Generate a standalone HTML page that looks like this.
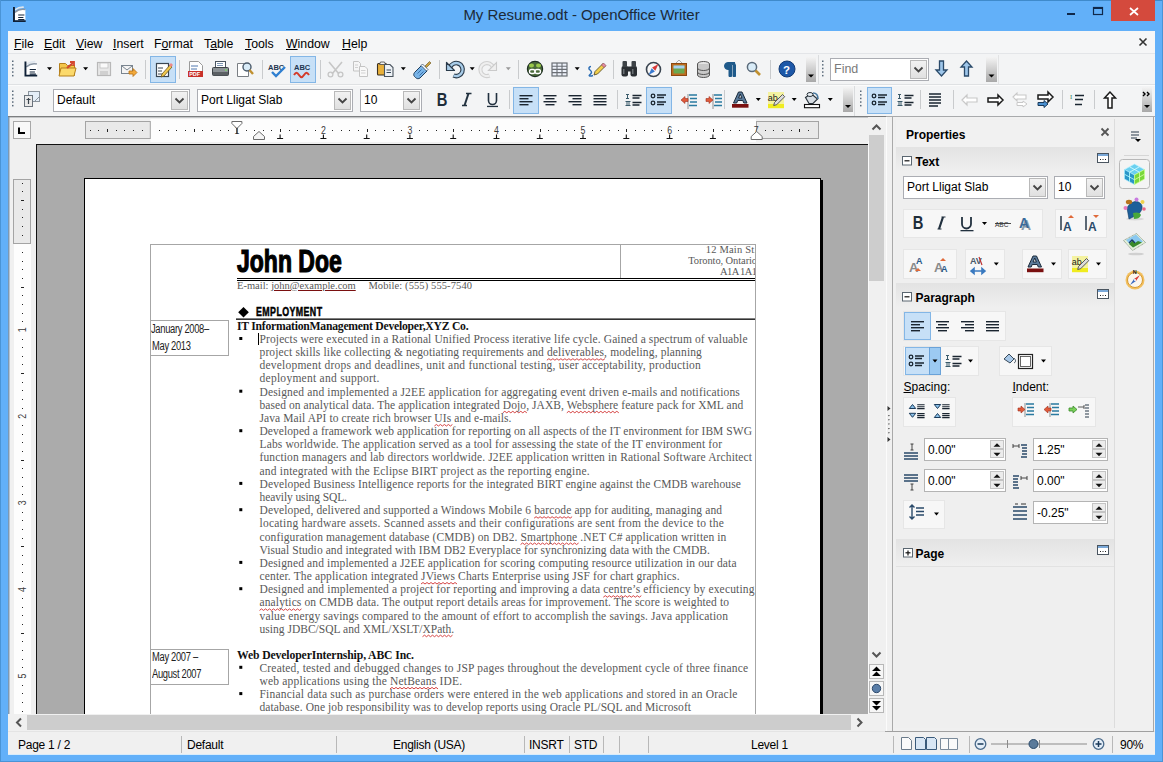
<!DOCTYPE html><html><head><meta charset="utf-8"><style>*{margin:0;padding:0;box-sizing:border-box}
html,body{width:1163px;height:762px;overflow:hidden;background:#62b0f9;font-family:"Liberation Sans",sans-serif;font-size:12px;color:#000}
.a{position:absolute}
.t{white-space:nowrap}
svg{overflow:visible}
.menu{font-size:12.3px}
u{text-decoration:underline;text-underline-offset:1px}
.sp{}
.lk{text-decoration:underline;text-decoration-color:#7a1010}
</style></head><body><div class="a" style="left:0;top:0;width:1163px;height:762px;background:#62b0f9"></div><div class="a" style="left:0;top:0;width:1163px;height:1px;background:#3f8acb"></div><div class="a" style="left:0;top:0;width:1px;height:762px;background:#4a94d6"></div><div class="a" style="left:1162px;top:0;width:1px;height:762px;background:#4a94d6"></div><div class="a" style="left:0;top:761px;width:1163px;height:1px;background:#4a94d6"></div><div class="a t" style="left:0;top:6px;width:1163px;text-align:center;font-size:15px;color:#1c2a38;letter-spacing:-0.05px">My Resume.odt - OpenOffice Writer</div><div class="a" style="left:1111px;top:0;width:44px;height:21px;background:#d44a3d"></div><svg class="a" style="left:0;top:0" width="1163" height="762"><path d="M1130 8l8 7M1138 8l-8 7" stroke="#fff" stroke-width="1.7"/><rect x="1067" y="13" width="8" height="2" fill="#10284a"/><rect x="1093.5" y="7.5" width="9" height="7" fill="none" stroke="#10284a" stroke-width="1.2"/><rect x="1093" y="7" width="10" height="2" fill="#10284a"/><g transform="translate(0,0)"><path d="M14.8 12.2c3-2.6 7-3.6 10.6-2.8v11h-10.6z" fill="#fff"/><path d="M14.8 12.3c3-2.6 7-3.6 10.6-2.8" stroke="#8a96a4" stroke-width="1.6" fill="none"/><path d="M14.8 9.8c3-2 6-2.8 9-2.6" stroke="#dfe6ee" stroke-width="1.6" fill="none"/><path d="M13 7h1.9v13.2h10.8v1.8h-12.7z" fill="#0f2036"/><path d="M18.2 15h6.2M18.2 17.5h5.2M18.2 19.6h6.2" stroke="#14263c" stroke-width="1.1"/></g></svg><div class="a" style="left:8px;top:31px;width:1147px;height:724px;background:#f0f0f0"></div><div class="a" style="left:8px;top:31px;width:1147px;height:23px;background:#f5f6f7"></div><div class="a" style="left:8px;top:53px;width:1147px;height:1px;background:#e3e5e8"></div><div class="a t menu" style="left:14px;top:36.5px"><u>F</u>ile</div><div class="a t menu" style="left:44px;top:36.5px"><u>E</u>dit</div><div class="a t menu" style="left:76px;top:36.5px"><u>V</u>iew</div><div class="a t menu" style="left:113px;top:36.5px"><u>I</u>nsert</div><div class="a t menu" style="left:154px;top:36.5px">F<u>o</u>rmat</div><div class="a t menu" style="left:204px;top:36.5px">T<u>a</u>ble</div><div class="a t menu" style="left:245px;top:36.5px"><u>T</u>ools</div><div class="a t menu" style="left:286px;top:36.5px"><u>W</u>indow</div><div class="a t menu" style="left:342px;top:36.5px"><u>H</u>elp</div><svg class="a" style="left:0;top:0" width="1163" height="762"><path d="M1139.5 38.5l7 7M1146.5 38.5l-7 7" stroke="#333" stroke-width="1.6"/></svg><div class="a" style="left:8px;top:54px;width:1147px;height:62px;background:#f3f4f5"></div><div class="a" style="left:8px;top:84px;width:1147px;height:1px;background:#dfe1e3"></div><div class="a" style="left:8px;top:85px;width:1147px;height:1px;background:#fbfbfb"></div><div class="a" style="left:8px;top:116px;width:878px;height:1px;background:#7c7e80"></div><div class="a" style="left:8px;top:117px;width:878px;height:1px;background:#c4c6c8"></div><div class="a" style="left:886px;top:116px;width:269px;height:1px;background:#a8aaac"></div><svg class="a" style="left:0;top:0" width="1163" height="762"><rect x="12" y="60.5" width="1.5" height="1.5" fill="#5a6a7a"/><rect x="12" y="64.1" width="1.5" height="1.5" fill="#5a6a7a"/><rect x="12" y="67.7" width="1.5" height="1.5" fill="#5a6a7a"/><rect x="12" y="71.3" width="1.5" height="1.5" fill="#5a6a7a"/><rect x="12" y="74.9" width="1.5" height="1.5" fill="#5a6a7a"/><g transform="translate(11.5,54.5)"><path d="M14.8 12.2c3-2.6 7-3.6 10.6-2.8v11h-10.6z" fill="#fff"/><path d="M14.8 12.3c3-2.6 7-3.6 10.6-2.8" stroke="#8a96a4" stroke-width="1.6" fill="none"/><path d="M14.8 9.8c3-2 6-2.8 9-2.6" stroke="#dfe6ee" stroke-width="1.6" fill="none"/><path d="M13 7h1.9v13.2h10.8v1.8h-12.7z" fill="#0f2036"/><path d="M18.2 15h6.2M18.2 17.5h5.2M18.2 19.6h6.2" stroke="#14263c" stroke-width="1.1"/></g><path d="M47.0 67.2h5l-2.5 3z" fill="#000"/><path d="M59.5 63.5h6l2 2h7v10h-15z" fill="#f4c64a" stroke="#b5801c"/><path d="M61 68h15l-2 8h-15z" fill="#fbd96b" stroke="#b5801c"/><path d="M67 68l6-5" stroke="#d4472f" stroke-width="2.2"/><path d="M70 62h4v4" stroke="#d4472f" stroke-width="1.8" fill="none"/><path d="M83.1 67.2h5l-2.5 3z" fill="#000"/><rect x="97.5" y="62.5" width="13" height="13" fill="#e8e8e8" stroke="#b8b8b8" stroke-width="1.2"/><rect x="100" y="63" width="8" height="5" fill="#fafafa" stroke="#c0c0c0" stroke-width=".8"/><rect x="100" y="71" width="8" height="4" fill="#d0d0d0"/><rect x="121.5" y="65.5" width="11" height="8" fill="#f4f4f4" stroke="#7a8590"/><path d="M122 66l5 4 5-4" stroke="#7a8590" fill="none"/><path d="M129 71h4v-2.5l4 4-4 4v-2.5h-4z" fill="#f2a93b" stroke="#b46d10" stroke-width=".8"/><rect x="145" y="60" width="1" height="19" fill="#c9cbcd"/><rect x="150.5" y="56.5" width="25" height="26" fill="#c7e0f7" stroke="#83b6e6"/><rect x="156.5" y="63.5" width="12" height="13" fill="#fff" stroke="#3a4652" stroke-width="1.2"/><path d="M158 68h5M158 71h4M158 74h5" stroke="#3a4652"/><path d="M162 74l8-9 2 2-8 9-3 1z" fill="#f1c84b" stroke="#6a5420" stroke-width=".8"/><path d="M169 65l2-2 2 2-2 2" fill="#e88" /><rect x="179" y="60" width="1" height="19" fill="#c9cbcd"/><path d="M189.5 61.5h9l4 4v11h-13z" fill="#fff" stroke="#9a9a9a"/><path d="M191 66h7M191 69h6" stroke="#5078b0"/><rect x="188" y="71" width="15" height="6" fill="#c8312a"/><text x="189.2" y="76.3" font-family="Liberation Sans" font-weight="bold" font-size="5.5" fill="#fff">PDF</text><rect x="215.5" y="61.5" width="10" height="6" fill="#fff" stroke="#4a5560"/><path d="M217 63.5h6M217 65.5h6" stroke="#5a7aa0" stroke-width=".8"/><rect x="212.5" y="67.5" width="16" height="8" rx="1" fill="#8c9296" stroke="#3c4246"/><rect x="213" y="72" width="15" height="3.5" fill="#5b6064"/><circle cx="226" cy="70" r=".9" fill="#7fdd6a"/><path d="M237.5 63.5h8l3 3v10h-11z" fill="#fff" stroke="#7a7f84"/><circle cx="247" cy="67" r="4" fill="#d9ecf8" stroke="#4a5a6a" stroke-width="1.4"/><path d="M249.5 70l3.5 4" stroke="#c09030" stroke-width="2.4"/><rect x="262" y="60" width="1" height="19" fill="#c9cbcd"/><text x="268" y="70" font-family="Liberation Sans" font-weight="bold" font-size="7.5" fill="#1f3550">ABC</text><path d="M272 72l4 4 9-9" stroke="#2f7fd0" stroke-width="2.4" fill="none"/><rect x="290.5" y="56.5" width="25" height="26" fill="#c7e0f7" stroke="#83b6e6"/><text x="294" y="70" font-family="Liberation Sans" font-weight="bold" font-size="7.5" fill="#1f3550">ABC</text><path d="M294 75c2-3 3-3 5 0s3 3 5 0 3-3 5 0" stroke="#d43a2a" stroke-width="2" fill="none"/><rect x="320" y="60" width="1" height="19" fill="#c9cbcd"/><path d="M329 62l10 12M342 62l-10 12" stroke="#c6c6c6" stroke-width="1.6"/><circle cx="330.5" cy="74.5" r="2.4" fill="none" stroke="#c6c6c6" stroke-width="1.3"/><circle cx="340.5" cy="74.5" r="2.4" fill="none" stroke="#c6c6c6" stroke-width="1.3"/><path d="M353.5 61.5h5l2 2v7.5h-7z" fill="#f6f6f6" stroke="#c4c4c4"/><path d="M359.5 66.5h5.5l2.5 2.5v7.5h-8z" fill="#f8f8f8" stroke="#c4c4c4"/><path d="M355 65h3M355 67.5h3M361 70.5h4.5M361 73h4.5" stroke="#c8c8c8" stroke-width=".8"/><rect x="377.5" y="63.5" width="9" height="11.5" rx="1" fill="#e8b03a" stroke="#3a3020" stroke-width="1.1"/><path d="M379.5 64.5h6l-1-2.5h-4z" fill="#f4f4f4" stroke="#444" stroke-width=".8"/><path d="M384.5 64.5h5.5l3 3v9h-8.5z" fill="#eef2f6" stroke="#4a545e" stroke-width="1.1"/><path d="M386.5 70h4.5M386.5 72.5h4.5" stroke="#3a4a5a" stroke-width="1"/><path d="M400.8 67.2h5l-2.5 3z" fill="#000"/><path d="M414.5 72.5l7-7 5.5 5.5-7 7c-1.5 1-3 1-4.5-.5l-1-1c-1-1-1-2.5 0-4z" fill="#78b4e8" stroke="#1f3d5c" stroke-width="1"/><path d="M417.5 73.5l4-4M419.5 75.5l4-4" stroke="#2d5f9c" stroke-width=".8"/><path d="M421 65.5l1.5-1.5 5.5 5.5-1.5 1.5z" fill="#fff" stroke="#1f3d5c" stroke-width=".7"/><path d="M425 66l4.5-4.5 1.5 1.5-4.5 4.5z" fill="#c8a040" stroke="#6a5018" stroke-width=".6"/><rect x="439" y="60" width="1" height="19" fill="#c9cbcd"/><path d="M450 67.5a6.5 6.5 0 1 1 3.5 8" stroke="#2a3a4a" stroke-width="4.6" fill="none"/><path d="M450 67.5a6.5 6.5 0 1 1 3.5 8" stroke="#a8cce8" stroke-width="2.4" fill="none"/><path d="M446.5 62.5v8h8z" fill="#a8cce8" stroke="#2a3a4a" stroke-width="1.2" stroke-linejoin="round"/><path d="M469.7 67.2h5l-2.5 3z" fill="#000"/><path d="M493 67.5a6.5 6.5 0 1 0 -3.5 8" stroke="#d0d0d0" stroke-width="4.2" fill="none"/><path d="M493 67.5a6.5 6.5 0 1 0 -3.5 8" stroke="#efefef" stroke-width="2" fill="none"/><path d="M496.5 62.5v8h-8z" fill="#efefef" stroke="#cacaca" stroke-width="1.1"/><path d="M505.8 67.2h5l-2.5 3z" fill="#9a9a9a"/><rect x="518" y="60" width="1" height="19" fill="#c9cbcd"/><circle cx="535" cy="69" r="7.6" fill="#4a6a3a" stroke="#1e2e22" stroke-width="1.2"/><ellipse cx="531.5" cy="65.5" rx="2.5" ry="2" fill="#9ac84a"/><ellipse cx="538.5" cy="65.5" rx="2.5" ry="2" fill="#9ac84a"/><rect x="529.5" y="69.5" width="5.5" height="4" rx="2" fill="none" stroke="#fff" stroke-width="1.3"/><rect x="535" y="69.5" width="5.5" height="4" rx="2" fill="none" stroke="#fff" stroke-width="1.3"/><rect x="552" y="63" width="15" height="13" fill="#eef2fa" stroke="#6a6e74" stroke-width="1.2"/><path d="M552 66.2h15M552 69.4h15M552 72.6h15M557 63v13M562 63v13" stroke="#6a6e74" stroke-width="1.1"/><path d="M574.7 67.2h5l-2.5 3z" fill="#000"/><path d="M591 66.5c-2 0-3 2-1 3.5s2 3 0 4.5 0 2 3 1" stroke="#2b6db5" stroke-width="1.5" fill="none"/><path d="M594 75l1-3.5 8-8 2.5 2.5-8 8z" fill="#f2d04b" stroke="#4a4020" stroke-width=".8"/><path d="M601.5 65l2-2 2.5 2.5-2 2z" fill="#e48aa0" stroke="#8a4a5a" stroke-width=".6"/><rect x="613" y="60" width="1" height="19" fill="#c9cbcd"/><rect x="621.5" y="66" width="6.5" height="10.5" rx="2" fill="#2b2f33"/><rect x="630.5" y="66" width="6.5" height="10.5" rx="2" fill="#2b2f33"/><rect x="622.5" y="61" width="4.5" height="6" rx="1" fill="#3d4246"/><rect x="631.5" y="61" width="4.5" height="6" rx="1" fill="#3d4246"/><rect x="627" y="66.5" width="4" height="5" fill="#2b2f33"/><rect x="623" y="69" width="1.5" height="5" fill="#6a7074"/><rect x="632" y="69" width="1.5" height="5" fill="#6a7074"/><circle cx="653.5" cy="69.5" r="7" fill="#f8f8f8" stroke="#3a4450" stroke-width="1.6"/><path d="M658.5 64l-3.2 6.8-3.2-3.2z" fill="#d83a3a"/><path d="M648.5 75l3.2-6.8 3.2 3.2z" fill="#3a7ad0"/><rect x="671.5" y="63.5" width="15" height="12" fill="#c06a20" stroke="#8a4a10"/><rect x="673.5" y="65.5" width="11" height="8" fill="#6aa84f"/><path d="M673.5 65.5h11v3h-11z" fill="#a8d0f0"/><path d="M676 63l3-3 3 3" stroke="#888" fill="none" stroke-width=".7"/><g transform="translate(-6,0)"><ellipse cx="709.5" cy="64" rx="6" ry="2.5" fill="#e4e4e4" stroke="#555"/><path d="M703.5 64v11a6 2.5 0 0 0 12 0v-11" fill="#c8c8c8" stroke="#555"/><path d="M703.5 68a6 2.5 0 0 0 12 0M703.5 72a6 2.5 0 0 0 12 0" fill="none" stroke="#555"/></g><path d="M735 62.5h-7a3.5 3.5 0 0 0 0 7h1v7h2.5v-12h1.5v12h2.5v-12" fill="#1f5a8a" stroke="#1f5a8a" stroke-width="1"/><circle cx="752" cy="67" r="4.6" fill="#d9ecf8" stroke="#5a6a7a" stroke-width="1.5"/><path d="M755.5 70.5l4.5 4.5" stroke="#c09030" stroke-width="2.6"/><rect x="770" y="60" width="1" height="19" fill="#c9cbcd"/><circle cx="787" cy="69" r="8" fill="#1d58a8" stroke="#123a74"/><text x="783" y="73.5" font-family="Liberation Sans" font-weight="bold" font-size="11.5" fill="#fff">?</text><defs><linearGradient id="ovg" x1="0" y1="0" x2="0" y2="1"><stop offset="0" stop-color="#f4f4f4"/><stop offset="1" stop-color="#a8a8a8"/></linearGradient></defs><rect x="806" y="57" width="10" height="25" fill="url(#ovg)"/><path d="M808.0 74.5h6l-3.0 3z" fill="#000"/><rect x="818" y="55" width="1" height="29" fill="#dadcde"/><rect x="822" y="60.5" width="1.5" height="1.5" fill="#5a6a7a"/><rect x="822" y="64.1" width="1.5" height="1.5" fill="#5a6a7a"/><rect x="822" y="67.7" width="1.5" height="1.5" fill="#5a6a7a"/><rect x="822" y="71.3" width="1.5" height="1.5" fill="#5a6a7a"/><rect x="822" y="74.9" width="1.5" height="1.5" fill="#5a6a7a"/><rect x="986" y="57" width="11" height="25" fill="url(#ovg)"/><path d="M988.5 74.5h6l-3.0 3z" fill="#000"/><rect x="998" y="55" width="1" height="29" fill="#e2e3e4"/><path d="M942 61v9h-3.5l5.5 6 5.5-6h-3.5v-9z" fill="#9ec6ea" stroke="#2a4a6a" stroke-width="1.3" transform="translate(-2.5,0)"/><path d="M967 76v-9h-3.5l5.5-6 5.5 6h-3.5v9z" fill="#9ec6ea" stroke="#2a4a6a" stroke-width="1.3" transform="translate(-2.5,0)"/></svg><div class="a" style="left:830px;top:58px;width:99px;height:23px;background:#fff;border:1px solid #abadb3"></div><div class="a t" style="left:834px;top:58px;height:23px;line-height:23px;font-size:12.5px;color:#7a7a7a">Find</div><div class="a" style="left:910px;top:60px;width:17px;height:19px;background:linear-gradient(#f2f2f2,#e0e0e0);border:1px solid #b9b9b9"></div><svg class="a" style="left:0;top:0" width="1163" height="762"><path d="M914.5 67.5l4 4l4-4" stroke="#444" stroke-width="1.8" fill="none"/></svg><svg class="a" style="left:0;top:0" width="1163" height="762"><rect x="12" y="90.5" width="1.5" height="1.5" fill="#5a6a7a"/><rect x="12" y="94.1" width="1.5" height="1.5" fill="#5a6a7a"/><rect x="12" y="97.7" width="1.5" height="1.5" fill="#5a6a7a"/><rect x="12" y="101.3" width="1.5" height="1.5" fill="#5a6a7a"/><rect x="12" y="104.9" width="1.5" height="1.5" fill="#5a6a7a"/><rect x="28.5" y="91.5" width="11" height="10" fill="#e4eef8" stroke="#8a939c"/><path d="M35 101l4-4" stroke="#8a939c"/><rect x="24.5" y="95.5" width="8" height="11" fill="#eaeaea" stroke="#6a737c"/><path d="M28.5 98v6M26.5 99.5h4" stroke="#3a434c" stroke-width="1.2"/><text x="0" y="0" transform="translate(436.8,106.2) scale(0.82,1)" font-family="Liberation Sans" font-weight="bold" font-size="18" fill="#1f2d3a">B</text><path d="M464.5 105.5l4-12" stroke="#22313f" stroke-width="2"/><path d="M462 105.5h5M466 93.5h5.5" stroke="#22313f" stroke-width="1.3"/><path d="M488.5 93v7.5a4 4 0 0 0 8 0v-7.5" stroke="#22313f" stroke-width="1.6" fill="none"/><rect x="487" y="105.8" width="11" height="1.3" fill="#22313f"/><rect x="509" y="90" width="1" height="19" fill="#c9cbcd"/><rect x="513.5" y="87.5" width="25" height="26" fill="#c7e0f7" stroke="#83b6e6"/><rect x="519.5" y="95" width="13" height="1.4" fill="#1a2530"/><rect x="519.5" y="98" width="9" height="1.4" fill="#1a2530"/><rect x="519.5" y="101" width="13" height="1.4" fill="#1a2530"/><rect x="519.5" y="104" width="9" height="1.4" fill="#1a2530"/><rect x="543.5" y="95" width="13" height="1.4" fill="#1a2530"/><rect x="545.5" y="98" width="9" height="1.4" fill="#1a2530"/><rect x="543.5" y="101" width="13" height="1.4" fill="#1a2530"/><rect x="545.5" y="104" width="9" height="1.4" fill="#1a2530"/><rect x="568.5" y="95" width="13" height="1.4" fill="#1a2530"/><rect x="572.5" y="98" width="9" height="1.4" fill="#1a2530"/><rect x="568.5" y="101" width="13" height="1.4" fill="#1a2530"/><rect x="572.5" y="104" width="9" height="1.4" fill="#1a2530"/><rect x="593.5" y="95" width="13" height="1.4" fill="#1a2530"/><rect x="593.5" y="98" width="13" height="1.4" fill="#1a2530"/><rect x="593.5" y="101" width="13" height="1.4" fill="#1a2530"/><rect x="593.5" y="104" width="13" height="1.4" fill="#1a2530"/><rect x="617" y="90" width="1" height="19" fill="#c9cbcd"/><path d="M626.0 94.5h3M627.5 94.5v4M626.0 98.5h3" stroke="#3a5a6a" stroke-width="1"/><path d="M625.5 101.5h5M627.0 101.5v4M629.0 101.5v4M625.5 105.5h5" stroke="#3a5a6a" stroke-width="1"/><path d="M632.5 95.5h9M632.5 98h7M632.5 102.5h9M632.5 105h7" stroke="#1a2530" stroke-width="1.4"/><rect x="646.5" y="87.5" width="25" height="26" fill="#c7e0f7" stroke="#83b6e6"/><circle cx="653" cy="96" r="1.8" fill="none" stroke="#1a2530" stroke-width="1.3"/><circle cx="653" cy="103" r="1.8" fill="none" stroke="#1a2530" stroke-width="1.3"/><path d="M657 95h9M657 97.5h7M657 102h9M657 104.5h7" stroke="#1a2530" stroke-width="1.4"/><path d="M688 94v15" stroke="#777" stroke-width=".8"/><path d="M689 95h8M690 98.5h7M690 102h7M689 105.5h8" stroke="#2a7aa0" stroke-width="1.5"/><path d="M681 100l4-3.5v2h3v3h-3v2z" fill="#e05a3a" stroke="#a03020" stroke-width=".6"/><path d="M713 94v15" stroke="#777" stroke-width=".8"/><path d="M714 95h8M715 98.5h7M715 102h7M714 105.5h8" stroke="#2a7aa0" stroke-width="1.5"/><path d="M713 100l-4-3.5v2h-3v3h3v2z" fill="#e05a3a" stroke="#a03020" stroke-width=".6"/><rect x="724" y="90" width="1" height="19" fill="#c9cbcd"/><path d="M733.5 103l5-11h3.5l5 11h-3.2l-1-2.5h-5.1l-1 2.5zM738.6 98h3.3l-1.65-4z" fill="#5a7a9a" stroke="#1a2a3a" stroke-width="1" fill-rule="evenodd"/><rect x="732" y="104" width="16.5" height="3.7" fill="#7a1010"/><path d="M755.8 98.0h5l-2.5 3z" fill="#000"/><rect x="768" y="92" width="16" height="12" fill="#f4f2a0"/><rect x="768" y="104" width="16" height="4.2" fill="#f0ec20"/><text x="767.8" y="101" font-family="Liberation Sans" font-size="9" fill="#222">ab</text><path d="M774.5 102.5l8-8 2.2 2.2-8 8-3 .8z" fill="#dcdcdc" stroke="#4a4a4a" stroke-width=".9"/><path d="M791.7 98.0h5l-2.5 3z" fill="#000"/><path d="M805.5 97.5l5.5-4 6.5 5.5-4.5 4.5h-4z" fill="#d8dee4" stroke="#2a343c" stroke-width="1.2"/><ellipse cx="810" cy="94.5" rx="3" ry="2" fill="#e8eef2" stroke="#2a343c" stroke-width="1"/><path d="M813 93c3 0 5 2 5 6" stroke="#4a7aa0" stroke-width="1.6" fill="none"/><rect x="804.5" y="104.5" width="15" height="3.2" fill="#fff" stroke="#111" stroke-width="1.1"/><path d="M827.8 98.0h5l-2.5 3z" fill="#000"/><rect x="843" y="87" width="10" height="25" fill="url(#ovg2)"/><path d="M845.0 105.0h6l-3.0 3z" fill="#000"/><defs><linearGradient id="ovg2" x1="0" y1="0" x2="0" y2="1"><stop offset="0" stop-color="#f4f4f4"/><stop offset="1" stop-color="#a8a8a8"/></linearGradient></defs><rect x="854" y="86" width="1" height="30" fill="#dadcde"/><rect x="860" y="90.5" width="1.5" height="1.5" fill="#5a6a7a"/><rect x="860" y="94.1" width="1.5" height="1.5" fill="#5a6a7a"/><rect x="860" y="97.7" width="1.5" height="1.5" fill="#5a6a7a"/><rect x="860" y="101.3" width="1.5" height="1.5" fill="#5a6a7a"/><rect x="860" y="104.9" width="1.5" height="1.5" fill="#5a6a7a"/><rect x="867.5" y="87.5" width="24" height="26" fill="#c7e0f7" stroke="#83b6e6"/><circle cx="874" cy="96" r="1.8" fill="none" stroke="#1a2530" stroke-width="1.3"/><circle cx="874" cy="103" r="1.8" fill="none" stroke="#1a2530" stroke-width="1.3"/><path d="M878 95h9M878 97.5h7M878 102h9M878 104.5h7" stroke="#1a2530" stroke-width="1.4"/><path d="M898.0 94.5h3M899.5 94.5v4M898.0 98.5h3" stroke="#3a5a6a" stroke-width="1"/><path d="M897.5 101.5h5M899.0 101.5v4M901.0 101.5v4M897.5 105.5h5" stroke="#3a5a6a" stroke-width="1"/><path d="M904.5 95.5h9M904.5 98h7M904.5 102.5h9M904.5 105h7" stroke="#1a2530" stroke-width="1.4"/><rect x="920" y="90" width="1" height="19" fill="#c9cbcd"/><path d="M929 94h12M929 97h12M929 100h12M929 103h12M929 106h9" stroke="#1a2530" stroke-width="1.4"/><rect x="953" y="90" width="1" height="19" fill="#c9cbcd"/><path d="M962 100l5-5v3h10v4h-10v3z" fill="#fff" stroke="#c8c8c8" stroke-width="1.2"/><path d="M1003 100l-5-5v3h-10v4h10v3z" fill="#fff" stroke="#1a1a1a" stroke-width="1.5"/><path d="M1013 97l4-4v2h9v4h-9v2z" fill="#fff" stroke="#c8c8c8" stroke-width="1.1"/><path d="M1027 104l-4-3v1.5h-6v3h6v1.5z" fill="#fff" stroke="#c8c8c8" stroke-width="1"/><path d="M1053 97l-5-5v3h-10v4h10v3z" fill="#fff" stroke="#1a1a1a" stroke-width="1.5"/><path d="M1048 104l-4-3.5v2h-6v3h6v2z" fill="#4a90d0" stroke="#1a3a5a" stroke-width="1"/><rect x="1062" y="90" width="1" height="19" fill="#c9cbcd"/><text x="1070" y="99" font-family="Liberation Serif" font-size="6.5" fill="#2a7a5a">I</text><path d="M1075 95.5h9M1075 99.5h8M1075 104.5h7" stroke="#1a2530" stroke-width="1.4"/><rect x="1094" y="90" width="1" height="19" fill="#c9cbcd"/><path d="M1110 92l-5.5 6h3.5v10h4v-10h3.5z" fill="#fff" stroke="#1a1a1a" stroke-width="1.5"/><rect x="1142" y="87" width="10" height="25" fill="url(#ovg2)"/><path d="M1144.0 105.0h6l-3.0 3z" fill="#000"/><path d="M1143 92l2 2-2 2M1147 92l2 2-2 2" stroke="#000" stroke-width="1.4" fill="none"/></svg><div class="a" style="left:53px;top:89px;width:137px;height:23px;background:#fff;border:1px solid #abadb3"></div><div class="a t" style="left:57px;top:89px;height:23px;line-height:23px;font-size:12px;color:#000">Default</div><div class="a" style="left:171px;top:91px;width:17px;height:19px;background:linear-gradient(#f2f2f2,#e0e0e0);border:1px solid #b9b9b9"></div><svg class="a" style="left:0;top:0" width="1163" height="762"><path d="M175.5 98.5l4 4l4-4" stroke="#444" stroke-width="1.8" fill="none"/></svg><div class="a" style="left:197px;top:89px;width:156px;height:23px;background:#fff;border:1px solid #abadb3"></div><div class="a t" style="left:201px;top:89px;height:23px;line-height:23px;font-size:12px;color:#000">Port Lligat Slab</div><div class="a" style="left:334px;top:91px;width:17px;height:19px;background:linear-gradient(#f2f2f2,#e0e0e0);border:1px solid #b9b9b9"></div><svg class="a" style="left:0;top:0" width="1163" height="762"><path d="M338.5 98.5l4 4l4-4" stroke="#444" stroke-width="1.8" fill="none"/></svg><div class="a" style="left:360px;top:89px;width:62px;height:23px;background:#fff;border:1px solid #abadb3"></div><div class="a t" style="left:364px;top:89px;height:23px;line-height:23px;font-size:12px;color:#000">10</div><div class="a" style="left:403px;top:91px;width:17px;height:19px;background:linear-gradient(#f2f2f2,#e0e0e0);border:1px solid #b9b9b9"></div><svg class="a" style="left:0;top:0" width="1163" height="762"><path d="M407.5 98.5l4 4l4-4" stroke="#444" stroke-width="1.8" fill="none"/></svg><div class="a" style="left:36px;top:144px;width:832px;height:570px;background:#ababab"></div><div class="a" style="left:36px;top:144px;width:832px;height:1px;background:#111"></div><div class="a" style="left:36px;top:144px;width:1px;height:570px;background:#111"></div><div class="a" style="left:84px;top:178px;width:737px;height:536px;background:#fff;border-left:1px solid #000;border-top:1px solid #000;border-right:1px solid #000"></div><div class="a" style="left:821px;top:180px;width:2px;height:534px;background:#000"></div><svg class="a" style="left:0;top:0" width="1163" height="762"><rect x="13.5" y="121.5" width="17" height="17" fill="#f8f8f8" stroke="#a8a8a8"/><path d="M19 127.5v5.5h6" stroke="#000" stroke-width="2" fill="none"/><rect x="150.3" y="119" width="605.7" height="23" fill="#fdfdfd"/><rect x="85.5" y="121.5" width="64.8" height="17" fill="#e9e9e9" stroke="#a4a4a4"/><rect x="756.5" y="121.5" width="62" height="17" fill="#e9e9e9" stroke="#a4a4a4"/><rect x="90" y="130" width="1" height="1" fill="#222"/><rect x="98" y="130" width="1" height="1" fill="#222"/><rect x="107" y="129" width="1" height="3" fill="#222"/><rect x="116" y="130" width="1" height="1" fill="#222"/><rect x="124" y="130" width="1" height="1" fill="#222"/><rect x="133" y="130" width="1" height="1" fill="#222"/><rect x="142" y="130" width="1" height="1" fill="#222"/><rect x="159" y="130" width="1" height="1" fill="#222"/><rect x="168" y="130" width="1" height="1" fill="#222"/><rect x="176" y="130" width="1" height="1" fill="#222"/><rect x="185" y="130" width="1" height="1" fill="#222"/><rect x="194" y="129" width="1" height="3" fill="#222"/><rect x="202" y="130" width="1" height="1" fill="#222"/><rect x="211" y="130" width="1" height="1" fill="#222"/><rect x="220" y="130" width="1" height="1" fill="#222"/><rect x="228" y="130" width="1" height="1" fill="#222"/><text x="0" y="0" transform="translate(236.9,134.3) scale(0.8,1.05)" text-anchor="middle" font-family="Liberation Sans" font-size="11" fill="#3a3a3a">1</text><rect x="246" y="130" width="1" height="1" fill="#222"/><rect x="254" y="130" width="1" height="1" fill="#222"/><rect x="263" y="130" width="1" height="1" fill="#222"/><rect x="271" y="130" width="1" height="1" fill="#222"/><rect x="280" y="129" width="1" height="3" fill="#222"/><rect x="289" y="130" width="1" height="1" fill="#222"/><rect x="297" y="130" width="1" height="1" fill="#222"/><rect x="306" y="130" width="1" height="1" fill="#222"/><rect x="315" y="130" width="1" height="1" fill="#222"/><text x="0" y="0" transform="translate(323.4,134.3) scale(0.8,1.05)" text-anchor="middle" font-family="Liberation Sans" font-size="11" fill="#3a3a3a">2</text><rect x="332" y="130" width="1" height="1" fill="#222"/><rect x="341" y="130" width="1" height="1" fill="#222"/><rect x="349" y="130" width="1" height="1" fill="#222"/><rect x="358" y="130" width="1" height="1" fill="#222"/><rect x="367" y="129" width="1" height="3" fill="#222"/><rect x="375" y="130" width="1" height="1" fill="#222"/><rect x="384" y="130" width="1" height="1" fill="#222"/><rect x="393" y="130" width="1" height="1" fill="#222"/><rect x="401" y="130" width="1" height="1" fill="#222"/><text x="0" y="0" transform="translate(409.9,134.3) scale(0.8,1.05)" text-anchor="middle" font-family="Liberation Sans" font-size="11" fill="#3a3a3a">3</text><rect x="419" y="130" width="1" height="1" fill="#222"/><rect x="427" y="130" width="1" height="1" fill="#222"/><rect x="436" y="130" width="1" height="1" fill="#222"/><rect x="445" y="130" width="1" height="1" fill="#222"/><rect x="453" y="129" width="1" height="3" fill="#222"/><rect x="462" y="130" width="1" height="1" fill="#222"/><rect x="471" y="130" width="1" height="1" fill="#222"/><rect x="479" y="130" width="1" height="1" fill="#222"/><rect x="488" y="130" width="1" height="1" fill="#222"/><text x="0" y="0" transform="translate(496.5,134.3) scale(0.8,1.05)" text-anchor="middle" font-family="Liberation Sans" font-size="11" fill="#3a3a3a">4</text><rect x="505" y="130" width="1" height="1" fill="#222"/><rect x="514" y="130" width="1" height="1" fill="#222"/><rect x="522" y="130" width="1" height="1" fill="#222"/><rect x="531" y="130" width="1" height="1" fill="#222"/><rect x="540" y="129" width="1" height="3" fill="#222"/><rect x="548" y="130" width="1" height="1" fill="#222"/><rect x="557" y="130" width="1" height="1" fill="#222"/><rect x="566" y="130" width="1" height="1" fill="#222"/><rect x="574" y="130" width="1" height="1" fill="#222"/><text x="0" y="0" transform="translate(583.0,134.3) scale(0.8,1.05)" text-anchor="middle" font-family="Liberation Sans" font-size="11" fill="#3a3a3a">5</text><rect x="592" y="130" width="1" height="1" fill="#222"/><rect x="600" y="130" width="1" height="1" fill="#222"/><rect x="609" y="130" width="1" height="1" fill="#222"/><rect x="618" y="130" width="1" height="1" fill="#222"/><rect x="626" y="129" width="1" height="3" fill="#222"/><rect x="635" y="130" width="1" height="1" fill="#222"/><rect x="644" y="130" width="1" height="1" fill="#222"/><rect x="652" y="130" width="1" height="1" fill="#222"/><rect x="661" y="130" width="1" height="1" fill="#222"/><text x="0" y="0" transform="translate(669.6,134.3) scale(0.8,1.05)" text-anchor="middle" font-family="Liberation Sans" font-size="11" fill="#3a3a3a">6</text><rect x="678" y="130" width="1" height="1" fill="#222"/><rect x="687" y="130" width="1" height="1" fill="#222"/><rect x="696" y="130" width="1" height="1" fill="#222"/><rect x="704" y="130" width="1" height="1" fill="#222"/><rect x="713" y="129" width="1" height="3" fill="#222"/><rect x="722" y="130" width="1" height="1" fill="#222"/><rect x="730" y="130" width="1" height="1" fill="#222"/><rect x="739" y="130" width="1" height="1" fill="#222"/><rect x="747" y="130" width="1" height="1" fill="#222"/><text x="0" y="0" transform="translate(756.2,134.3) scale(0.8,1.05)" text-anchor="middle" font-family="Liberation Sans" font-size="11" fill="#3a3a3a">7</text><rect x="765" y="130" width="1" height="1" fill="#222"/><rect x="773" y="130" width="1" height="1" fill="#222"/><rect x="782" y="130" width="1" height="1" fill="#222"/><rect x="791" y="130" width="1" height="1" fill="#222"/><rect x="799" y="129" width="1" height="3" fill="#222"/><rect x="808" y="130" width="1" height="1" fill="#222"/><path d="M280.1 134.5v4M277.1 138.5h6" stroke="#111" stroke-width="1.1"/><path d="M323.4 134.5v4M320.4 138.5h6" stroke="#111" stroke-width="1.1"/><path d="M366.7 134.5v4M363.7 138.5h6" stroke="#111" stroke-width="1.1"/><path d="M409.9 134.5v4M406.9 138.5h6" stroke="#111" stroke-width="1.1"/><path d="M453.2 134.5v4M450.2 138.5h6" stroke="#111" stroke-width="1.1"/><path d="M496.5 134.5v4M493.5 138.5h6" stroke="#111" stroke-width="1.1"/><path d="M539.8 134.5v4M536.8 138.5h6" stroke="#111" stroke-width="1.1"/><path d="M583.0 134.5v4M580.0 138.5h6" stroke="#111" stroke-width="1.1"/><path d="M626.3 134.5v4M623.3 138.5h6" stroke="#111" stroke-width="1.1"/><path d="M669.6 134.5v4M666.6 138.5h6" stroke="#111" stroke-width="1.1"/><path d="M712.9 134.5v4M709.9 138.5h6" stroke="#111" stroke-width="1.1"/><path d="M231.9 121.5h10v2l-5 5l-5-5z" fill="#fff" stroke="#6a6a6a"/><path d="M236.9 128v6" stroke="#222" stroke-width="1.1"/><path d="M253.5 139.5h11v-3l-5.5-5l-5.5 5z" fill="#f4f4f4" stroke="#6a6a6a"/><path d="M751.2 139.5h11v-3l-5.5-5l-5.5 5z" fill="#fff" stroke="#6a6a6a"/><rect x="8" y="141" width="28" height="573" fill="#f0f0f0"/><rect x="14" y="243" width="17" height="471" fill="#fdfdfd"/><rect x="8" y="117" width="1.5" height="614" fill="#7d98b3"/><rect x="13.5" y="179.5" width="17" height="64" fill="#e9e9e9" stroke="#a4a4a4"/><rect x="22" y="183" width="1" height="1" fill="#222"/><rect x="22" y="191" width="1" height="1" fill="#222"/><rect x="21" y="200" width="3" height="1" fill="#222"/><rect x="22" y="209" width="1" height="1" fill="#222"/><rect x="22" y="217" width="1" height="1" fill="#222"/><rect x="22" y="226" width="1" height="1" fill="#222"/><rect x="22" y="235" width="1" height="1" fill="#222"/><rect x="22" y="252" width="1" height="1" fill="#222"/><rect x="22" y="261" width="1" height="1" fill="#222"/><rect x="22" y="269" width="1" height="1" fill="#222"/><rect x="22" y="278" width="1" height="1" fill="#222"/><rect x="21" y="287" width="3" height="1" fill="#222"/><rect x="22" y="295" width="1" height="1" fill="#222"/><rect x="22" y="304" width="1" height="1" fill="#222"/><rect x="22" y="313" width="1" height="1" fill="#222"/><rect x="22" y="321" width="1" height="1" fill="#222"/><text x="0" y="0" transform="translate(26.3,329.9) rotate(-90) scale(0.8,1.05)" text-anchor="middle" font-family="Liberation Sans" font-size="11" fill="#3a3a3a">1</text><rect x="22" y="339" width="1" height="1" fill="#222"/><rect x="22" y="347" width="1" height="1" fill="#222"/><rect x="22" y="356" width="1" height="1" fill="#222"/><rect x="22" y="364" width="1" height="1" fill="#222"/><rect x="21" y="373" width="3" height="1" fill="#222"/><rect x="22" y="382" width="1" height="1" fill="#222"/><rect x="22" y="390" width="1" height="1" fill="#222"/><rect x="22" y="399" width="1" height="1" fill="#222"/><rect x="22" y="408" width="1" height="1" fill="#222"/><text x="0" y="0" transform="translate(26.3,416.4) rotate(-90) scale(0.8,1.05)" text-anchor="middle" font-family="Liberation Sans" font-size="11" fill="#3a3a3a">2</text><rect x="22" y="425" width="1" height="1" fill="#222"/><rect x="22" y="434" width="1" height="1" fill="#222"/><rect x="22" y="442" width="1" height="1" fill="#222"/><rect x="22" y="451" width="1" height="1" fill="#222"/><rect x="21" y="460" width="3" height="1" fill="#222"/><rect x="22" y="468" width="1" height="1" fill="#222"/><rect x="22" y="477" width="1" height="1" fill="#222"/><rect x="22" y="486" width="1" height="1" fill="#222"/><rect x="22" y="494" width="1" height="1" fill="#222"/><text x="0" y="0" transform="translate(26.3,502.9) rotate(-90) scale(0.8,1.05)" text-anchor="middle" font-family="Liberation Sans" font-size="11" fill="#3a3a3a">3</text><rect x="22" y="512" width="1" height="1" fill="#222"/><rect x="22" y="520" width="1" height="1" fill="#222"/><rect x="22" y="529" width="1" height="1" fill="#222"/><rect x="22" y="538" width="1" height="1" fill="#222"/><rect x="21" y="546" width="3" height="1" fill="#222"/><rect x="22" y="555" width="1" height="1" fill="#222"/><rect x="22" y="564" width="1" height="1" fill="#222"/><rect x="22" y="572" width="1" height="1" fill="#222"/><rect x="22" y="581" width="1" height="1" fill="#222"/><text x="0" y="0" transform="translate(26.3,589.5) rotate(-90) scale(0.8,1.05)" text-anchor="middle" font-family="Liberation Sans" font-size="11" fill="#3a3a3a">4</text><rect x="22" y="598" width="1" height="1" fill="#222"/><rect x="22" y="607" width="1" height="1" fill="#222"/><rect x="22" y="615" width="1" height="1" fill="#222"/><rect x="22" y="624" width="1" height="1" fill="#222"/><rect x="21" y="633" width="3" height="1" fill="#222"/><rect x="22" y="641" width="1" height="1" fill="#222"/><rect x="22" y="650" width="1" height="1" fill="#222"/><rect x="22" y="659" width="1" height="1" fill="#222"/><rect x="22" y="667" width="1" height="1" fill="#222"/><text x="0" y="0" transform="translate(26.3,676.0) rotate(-90) scale(0.8,1.05)" text-anchor="middle" font-family="Liberation Sans" font-size="11" fill="#3a3a3a">5</text><rect x="22" y="685" width="1" height="1" fill="#222"/><rect x="22" y="693" width="1" height="1" fill="#222"/><rect x="22" y="702" width="1" height="1" fill="#222"/><rect x="22" y="711" width="1" height="1" fill="#222"/></svg><div class="a" style="left:85px;top:179px;width:735px;height:535px;overflow:hidden"><div class="a" style="left:-85px;top:-179px;width:1163px;height:762px"><svg class="a" style="left:0;top:0" width="1163" height="762"><rect x="150" y="244" width="606" height="1" fill="#a6a6a6"/><rect x="150" y="244" width="1" height="470" fill="#a6a6a6"/><rect x="755" y="244" width="1" height="470" fill="#a6a6a6"/><rect x="620" y="244" width="1" height="34" fill="#a6a6a6"/><rect x="237" y="278" width="518" height="1" fill="#000"/><rect x="237" y="280" width="518" height="1" fill="#000"/><rect x="236" y="318.5" width="519" height="1.3" fill="#000"/><rect x="150.5" y="320.5" width="78" height="35" fill="none" stroke="#a6a6a6"/><rect x="150.5" y="649.5" width="78" height="35" fill="none" stroke="#a6a6a6"/><path d="M243.5 307l5.3 5.2-5.3 5.2-5.3-5.2z" fill="#000"/><rect x="239.3" y="337.0" width="3" height="3" fill="#000"/><rect x="239.3" y="389.7" width="3" height="3" fill="#000"/><rect x="239.3" y="429.2" width="3" height="3" fill="#000"/><rect x="239.3" y="481.9" width="3" height="3" fill="#000"/><rect x="239.3" y="508.2" width="3" height="3" fill="#000"/><rect x="239.3" y="560.9" width="3" height="3" fill="#000"/><rect x="239.3" y="587.2" width="3" height="3" fill="#000"/><rect x="239.3" y="665.8" width="3" height="3" fill="#000"/><rect x="239.3" y="692.1" width="3" height="3" fill="#000"/><rect x="258" y="333" width="1" height="12" fill="#000"/><path d="M546.9 360.2L548.9 358.7L550.9 360.2L552.9 358.7L554.9 360.2L556.9 358.7L558.9 360.2L560.9 358.7L562.9 360.2L564.9 358.7L566.9 360.2L568.9 358.7L570.9 360.2L572.9 358.7L574.9 360.2L576.9 358.7L578.9 360.2L580.9 358.7L582.9 360.2L584.9 358.7L586.9 360.2L588.9 358.7L590.9 360.2L592.9 358.7L594.9 360.2L596.9 358.7L598.9 360.2L600.9 358.7L602.9 360.2L604.9 358.7" stroke="#d03030" stroke-width="0.9" fill="none"/><path d="M502.8 412.8L504.8 411.3L506.8 412.8L508.8 411.3L510.8 412.8L512.8 411.3L514.8 412.8L516.8 411.3L518.8 412.8L520.8 411.3L522.8 412.8L524.8 411.3L526.8 412.8" stroke="#d03030" stroke-width="0.9" fill="none"/><path d="M566.8 412.8L568.8 411.3L570.8 412.8L572.8 411.3L574.8 412.8L576.8 411.3L578.8 412.8L580.8 411.3L582.8 412.8L584.8 411.3L586.8 412.8L588.8 411.3L590.8 412.8L592.8 411.3L594.8 412.8L596.8 411.3L598.8 412.8L600.8 411.3L602.8 412.8L604.8 411.3L606.8 412.8L608.8 411.3L610.8 412.8L612.8 411.3L614.8 412.8L616.8 411.3L618.8 412.8" stroke="#d03030" stroke-width="0.9" fill="none"/><path d="M434.4 426.0L436.4 424.5L438.4 426.0L440.4 424.5L442.4 426.0L444.4 424.5L446.4 426.0L448.4 424.5L450.4 426.0L452.4 424.5" stroke="#d03030" stroke-width="0.9" fill="none"/><path d="M534.1 518.2L536.1 516.7L538.1 518.2L540.1 516.7L542.1 518.2L544.1 516.7L546.1 518.2L548.1 516.7L550.1 518.2L552.1 516.7L554.1 518.2L556.1 516.7L558.1 518.2L560.1 516.7L562.1 518.2L564.1 516.7L566.1 518.2L568.1 516.7L570.1 518.2L572.1 516.7" stroke="#d03030" stroke-width="0.9" fill="none"/><path d="M520.6 544.5L522.6 543.0L524.6 544.5L526.6 543.0L528.6 544.5L530.6 543.0L532.6 544.5L534.6 543.0L536.6 544.5L538.6 543.0L540.6 544.5L542.6 543.0L544.6 544.5L546.6 543.0L548.6 544.5L550.6 543.0L552.6 544.5L554.6 543.0L556.6 544.5L558.6 543.0L560.6 544.5L562.6 543.0L564.6 544.5L566.6 543.0L568.6 544.5L570.6 543.0L572.6 544.5L574.6 543.0L576.6 544.5L578.6 543.0" stroke="#d03030" stroke-width="0.9" fill="none"/><path d="M421.0 584.0L423.0 582.5L425.0 584.0L427.0 582.5L429.0 584.0L431.0 582.5L433.0 584.0L435.0 582.5L437.0 584.0L439.0 582.5L441.0 584.0L443.0 582.5L445.0 584.0L447.0 582.5L449.0 584.0L451.0 582.5L453.0 584.0L455.0 582.5L457.0 584.0" stroke="#d03030" stroke-width="0.9" fill="none"/><path d="M603.3 597.2L605.3 595.7L607.3 597.2L609.3 595.7L611.3 597.2L613.3 595.7L615.3 597.2L617.3 595.7L619.3 597.2L621.3 595.7L623.3 597.2L625.3 595.7L627.3 597.2L629.3 595.7L631.3 597.2L633.3 595.7L635.3 597.2L637.3 595.7L639.3 597.2L641.3 595.7" stroke="#d03030" stroke-width="0.9" fill="none"/><path d="M259.5 610.4L261.5 608.9L263.5 610.4L265.5 608.9L267.5 610.4L269.5 608.9L271.5 610.4L273.5 608.9L275.5 610.4L277.5 608.9L279.5 610.4L281.5 608.9L283.5 610.4L285.5 608.9L287.5 610.4L289.5 608.9L291.5 610.4L293.5 608.9L295.5 610.4L297.5 608.9L299.5 610.4L301.5 608.9" stroke="#d03030" stroke-width="0.9" fill="none"/><path d="M422.5 636.7L424.5 635.2L426.5 636.7L428.5 635.2L430.5 636.7L432.5 635.2L434.5 636.7L436.5 635.2L438.5 636.7L440.5 635.2L442.5 636.7L444.5 635.2L446.5 636.7L448.5 635.2L450.5 636.7L452.5 635.2" stroke="#d03030" stroke-width="0.9" fill="none"/><path d="M390.0 688.9L392.0 687.4L394.0 688.9L396.0 687.4L398.0 688.9L400.0 687.4L402.0 688.9L404.0 687.4L406.0 688.9L408.0 687.4L410.0 688.9L412.0 687.4L414.0 688.9L416.0 687.4L418.0 688.9L420.0 687.4L422.0 688.9L424.0 687.4L426.0 688.9L428.0 687.4L430.0 688.9L432.0 687.4L434.0 688.9L436.0 687.4L438.0 688.9" stroke="#d03030" stroke-width="0.9" fill="none"/></svg><div class="a t" style="left:237px;top:243.5px;font-family:'Liberation Sans';font-weight:bold;font-size:31px;line-height:36px;color:#000;transform:scaleX(0.742);transform-origin:0 0;letter-spacing:0px;-webkit-text-stroke:1.2px #000">John Doe</div><div class="a" style="left:620px;top:244px;width:135px;height:34px;overflow:hidden"><div class="a t" style="right:-2.2px;top:-0.36px;font-family:'Liberation Serif';font-size:10.5px;line-height:11.6px;letter-spacing:0.2px;color:#585858">12 Main St.</div><div class="a t" style="right:-2px;top:11.34px;font-family:'Liberation Serif';font-size:10.5px;line-height:11.6px;letter-spacing:-0.1px;color:#585858">Toronto, Ontario</div><div class="a t" style="right:-1.4px;top:22.34px;font-family:'Liberation Serif';font-size:10.5px;line-height:11.6px;letter-spacing:-0.6px;color:#585858">A1A 1A1</div></div><div class="a t" style="left:237px;top:279.64px;font-family:'Liberation Serif';font-size:10.5px;line-height:11.62px;letter-spacing:0.000px;color:#585858;font-weight:normal">E-mail: <span class="lk">john@example.com</span></div><div class="a t" style="left:368.4px;top:279.64px;font-family:'Liberation Serif';font-size:10.5px;line-height:11.62px;letter-spacing:0.100px;color:#585858;font-weight:normal">Mobile: (555) 555-7540</div><div class="a t" style="left:255.6px;top:304px;font-family:'Liberation Sans';font-weight:bold;font-size:13px;line-height:15px;color:#000;transform:scaleX(0.68);transform-origin:0 0;letter-spacing:0.6px;-webkit-text-stroke:0.5px #000">EMPLOYMENT</div><div class="a t" style="left:237px;top:320.98px;font-family:'Liberation Serif';font-size:11.7px;line-height:12.95px;letter-spacing:-0.250px;color:#111;font-weight:bold">IT InformationManagement Developer,XYZ Co.</div><div class="a t" style="left:237px;top:649.78px;font-family:'Liberation Serif';font-size:11.7px;line-height:12.95px;letter-spacing:-0.120px;color:#111;font-weight:bold">Web DeveloperInternship, ABC Inc.</div><div class="a t" style="left:151px;top:322px;font-family:'Liberation Sans';font-size:12px;line-height:14px;color:#222;transform:scaleX(0.78);transform-origin:0 0;letter-spacing:-0.4px">January 2008–</div><div class="a t" style="left:152px;top:338.5px;font-family:'Liberation Sans';font-size:12px;line-height:14px;color:#222;transform:scaleX(0.78);transform-origin:0 0;letter-spacing:-0.4px">May 2013</div><div class="a t" style="left:151.8px;top:650px;font-family:'Liberation Sans';font-size:12px;line-height:14px;color:#222;transform:scaleX(0.78);transform-origin:0 0;letter-spacing:-0.4px">May 2007 –</div><div class="a t" style="left:151.8px;top:667px;font-family:'Liberation Sans';font-size:12px;line-height:14px;color:#222;transform:scaleX(0.78);transform-origin:0 0;letter-spacing:-0.4px">August 2007</div><div class="a t" style="left:259.5px;top:332.95px;font-family:'Liberation Serif';font-size:11.5px;line-height:12.73px;letter-spacing:0.119px;color:#585858;font-weight:normal">Projects were executed in a Rational Unified Process iterative life cycle. Gained a spectrum of valuable</div><div class="a t" style="left:259.5px;top:346.12px;font-family:'Liberation Serif';font-size:11.5px;line-height:12.73px;letter-spacing:0.134px;color:#585858;font-weight:normal">project skills like collecting &amp; negotiating requirements and <span class="sp">deliverables</span>, modeling, planning</div><div class="a t" style="left:259.5px;top:359.29px;font-family:'Liberation Serif';font-size:11.5px;line-height:12.73px;letter-spacing:0.222px;color:#585858;font-weight:normal">development drops and deadlines, unit and functional testing, user acceptability, production</div><div class="a t" style="left:259.5px;top:372.46px;font-family:'Liberation Serif';font-size:11.5px;line-height:12.73px;letter-spacing:0.267px;color:#585858;font-weight:normal">deployment and support.</div><div class="a t" style="left:259.5px;top:385.63px;font-family:'Liberation Serif';font-size:11.5px;line-height:12.73px;letter-spacing:0.158px;color:#585858;font-weight:normal">Designed and implemented a J2EE application for aggregating event driven e-mails and notifications</div><div class="a t" style="left:259.5px;top:398.80px;font-family:'Liberation Serif';font-size:11.5px;line-height:12.73px;letter-spacing:0.076px;color:#585858;font-weight:normal">based on analytical data. The application integrated <span class="sp">Dojo</span>, JAXB, <span class="sp">Websphere</span> feature pack for XML and</div><div class="a t" style="left:259.5px;top:411.97px;font-family:'Liberation Serif';font-size:11.5px;line-height:12.73px;letter-spacing:0.091px;color:#585858;font-weight:normal">Java Mail API to create rich browser <span class="sp">UIs</span> and e-mails.</div><div class="a t" style="left:259.5px;top:425.14px;font-family:'Liberation Serif';font-size:11.5px;line-height:12.73px;letter-spacing:0.061px;color:#585858;font-weight:normal">Developed a framework web application for reporting on all aspects of the IT environment for IBM SWG</div><div class="a t" style="left:259.5px;top:438.31px;font-family:'Liberation Serif';font-size:11.5px;line-height:12.73px;letter-spacing:0.140px;color:#585858;font-weight:normal">Labs worldwide. The application served as a tool for assessing the state of the IT environment for</div><div class="a t" style="left:259.5px;top:451.48px;font-family:'Liberation Serif';font-size:11.5px;line-height:12.73px;letter-spacing:0.130px;color:#585858;font-weight:normal">function managers and lab directors worldwide. J2EE application written in Rational Software Architect</div><div class="a t" style="left:259.5px;top:464.65px;font-family:'Liberation Serif';font-size:11.5px;line-height:12.73px;letter-spacing:0.204px;color:#585858;font-weight:normal">and integrated with the Eclipse BIRT project as the reporting engine.</div><div class="a t" style="left:259.5px;top:477.82px;font-family:'Liberation Serif';font-size:11.5px;line-height:12.73px;letter-spacing:0.113px;color:#585858;font-weight:normal">Developed Business Intelligence reports for the integrated BIRT engine against the CMDB warehouse</div><div class="a t" style="left:259.5px;top:490.99px;font-family:'Liberation Serif';font-size:11.5px;line-height:12.73px;letter-spacing:-0.096px;color:#585858;font-weight:normal">heavily using SQL.</div><div class="a t" style="left:259.5px;top:504.16px;font-family:'Liberation Serif';font-size:11.5px;line-height:12.73px;letter-spacing:0.124px;color:#585858;font-weight:normal">Developed, delivered and supported a Windows Mobile 6 <span class="sp">barcode</span> app for auditing, managing and</div><div class="a t" style="left:259.5px;top:517.33px;font-family:'Liberation Serif';font-size:11.5px;line-height:12.73px;letter-spacing:0.236px;color:#585858;font-weight:normal">locating hardware assets. Scanned assets and their configurations are sent from the device to the</div><div class="a t" style="left:259.5px;top:530.50px;font-family:'Liberation Serif';font-size:11.5px;line-height:12.73px;letter-spacing:0.120px;color:#585858;font-weight:normal">configuration management database (CMDB) on DB2. <span class="sp">Smartphone</span> .NET C# application written in</div><div class="a t" style="left:259.5px;top:543.67px;font-family:'Liberation Serif';font-size:11.5px;line-height:12.73px;letter-spacing:0.074px;color:#585858;font-weight:normal">Visual Studio and integrated with IBM DB2 Everyplace for synchronizing data with the CMDB.</div><div class="a t" style="left:259.5px;top:556.84px;font-family:'Liberation Serif';font-size:11.5px;line-height:12.73px;letter-spacing:0.141px;color:#585858;font-weight:normal">Designed and implemented a J2EE application for scoring computing resource utilization in our data</div><div class="a t" style="left:259.5px;top:570.01px;font-family:'Liberation Serif';font-size:11.5px;line-height:12.73px;letter-spacing:0.142px;color:#585858;font-weight:normal">center. The application integrated <span class="sp">JViews</span> Charts Enterprise using JSF for chart graphics.</div><div class="a t" style="left:259.5px;top:583.18px;font-family:'Liberation Serif';font-size:11.5px;line-height:12.73px;letter-spacing:0.153px;color:#585858;font-weight:normal">Designed and implemented a project for reporting and improving a data <span class="sp">centre’s</span> efficiency by executing</div><div class="a t" style="left:259.5px;top:596.35px;font-family:'Liberation Serif';font-size:11.5px;line-height:12.73px;letter-spacing:0.121px;color:#585858;font-weight:normal"><span class="sp">analytics</span> on CMDB data. The output report details areas for improvement. The score is weighted to</div><div class="a t" style="left:259.5px;top:609.52px;font-family:'Liberation Serif';font-size:11.5px;line-height:12.73px;letter-spacing:0.164px;color:#585858;font-weight:normal">value energy savings compared to the amount of effort to accomplish the savings. Java application</div><div class="a t" style="left:259.5px;top:622.69px;font-family:'Liberation Serif';font-size:11.5px;line-height:12.73px;letter-spacing:0.020px;color:#585858;font-weight:normal">using JDBC/SQL and XML/XSLT/<span class="sp">XPath</span>.</div><div class="a t" style="left:259.5px;top:661.72px;font-family:'Liberation Serif';font-size:11.5px;line-height:12.73px;letter-spacing:0.183px;color:#585858;font-weight:normal">Created, tested and debugged changes to JSP pages throughout the development cycle of three finance</div><div class="a t" style="left:259.5px;top:674.89px;font-family:'Liberation Serif';font-size:11.5px;line-height:12.73px;letter-spacing:0.197px;color:#585858;font-weight:normal">web applications using the <span class="sp">NetBeans</span> IDE.</div><div class="a t" style="left:259.5px;top:688.06px;font-family:'Liberation Serif';font-size:11.5px;line-height:12.73px;letter-spacing:0.211px;color:#585858;font-weight:normal">Financial data such as purchase orders were entered in the web applications and stored in an Oracle</div><div class="a t" style="left:259.5px;top:701.23px;font-family:'Liberation Serif';font-size:11.5px;line-height:12.73px;letter-spacing:0.085px;color:#585858;font-weight:normal">database. One job responsibility was to develop reports using Oracle PL/SQL and Microsoft</div></div></div><svg class="a" style="left:0;top:0" width="1163" height="762"><rect x="868" y="117" width="17" height="597" fill="#f0f0f0"/><rect x="869" y="135" width="15" height="146" fill="#cdcdcd"/><rect x="868" y="141" width="1" height="573" fill="#fafafa"/><path d="M872.5 129.5l4-4 4 4" stroke="#555" stroke-width="2" fill="none"/><path d="M872.5 652.5l4 4 4-4" stroke="#555" stroke-width="2" fill="none"/><rect x="869.5" y="664.5" width="14" height="14" fill="#f6f6f6" stroke="#b8b8b8"/><path d="M872 671l4.5-4.5 4.5 4.5zM872 676l4.5-4.5 4.5 4.5z" fill="#000"/><rect x="869.5" y="681.5" width="14" height="14" fill="#f6f6f6" stroke="#b8b8b8"/><circle cx="876.5" cy="688.5" r="4.2" fill="#5a7ea8" stroke="#2e4a6c"/><rect x="869.5" y="698.5" width="14" height="14" fill="#f6f6f6" stroke="#b8b8b8"/><path d="M872 701l4.5 4.5 4.5-4.5zM872 706l4.5 4.5 4.5-4.5z" fill="#000"/><rect x="8" y="714" width="877" height="17" fill="#f0f0f0"/><rect x="27" y="715" width="824" height="15" fill="#cdcdcd"/><path d="M21 718.5l-4 4 4 4" stroke="#555" stroke-width="2" fill="none"/><path d="M857.5 718.5l4 4-4 4" stroke="#555" stroke-width="2" fill="none"/></svg><div class="a" style="left:885px;top:117px;width:270px;height:614px;background:#f0f0f0"></div><div class="a" style="left:892px;top:117px;width:1px;height:614px;background:#a9a9a9"></div><div class="a" style="left:895px;top:119px;width:220px;height:609px;background:#efefef;border-right:1px solid #dcdcdc"></div><div class="a" style="left:896px;top:120px;width:218px;height:27px;background:#f1f1f1"></div><div class="a t" style="left:906px;top:128px;font-size:12px;font-weight:bold">Properties</div><div class="a" style="left:896px;top:147px;width:218px;height:24px;background:linear-gradient(#e3e3e3,#efefef)"></div><div class="a" style="left:896px;top:283px;width:218px;height:24px;background:linear-gradient(#e3e3e3,#efefef)"></div><div class="a" style="left:896px;top:539px;width:218px;height:27px;background:linear-gradient(#e3e3e3,#efefef)"></div><div class="a t" style="left:915.5px;top:154.5px;font-size:12px;font-weight:bold">Text</div><div class="a t" style="left:915.5px;top:291px;font-size:12px;font-weight:bold">Paragraph</div><div class="a t" style="left:915.5px;top:547px;font-size:12px;font-weight:bold">Page</div><div class="a" style="left:896px;top:566px;width:218px;height:1px;background:#e2e2e2"></div><div class="a t" style="left:903.5px;top:380px;font-size:12px"><u>S</u>pacing:</div><div class="a t" style="left:1012.5px;top:380px;font-size:12px"><u>I</u>ndent:</div><svg class="a" style="left:0;top:0" width="1163" height="762"><path d="M888 415h1.8l-.9 1.5z" fill="#444"/><path d="M888 419.3h1.8l-.9 1.5z" fill="#444"/><path d="M888 423.6h1.8l-.9 1.5z" fill="#444"/><path d="M888 427.9h1.8l-.9 1.5z" fill="#444"/><path d="M888 432.2h1.8l-.9 1.5z" fill="#444"/><path d="M887.5 406v5l3-2.5z" fill="#333"/><path d="M887.5 437v5l3-2.5z" fill="#333"/><rect x="886" y="117" width="1" height="614" fill="#fbfbfb"/><path d="M1101.5 128.5l7 7M1108.5 128.5l-7 7" stroke="#555" stroke-width="1.8"/><rect x="902.5" y="156.5" width="9" height="8.5" fill="#fff" stroke="#5a6670"/><path d="M904.5 160.8h5" stroke="#111" stroke-width="1.2"/><rect x="1097.5" y="153.5" width="11" height="9" fill="#fff" stroke="#4a5560"/><rect x="1098" y="154" width="10" height="2" fill="#7aa8d8"/><path d="M1100 159.5h1M1102.5 159.5h1M1105 159.5h1" stroke="#222" stroke-width="1.2"/><rect x="902.5" y="292.5" width="9" height="8.5" fill="#fff" stroke="#5a6670"/><path d="M904.5 296.8h5" stroke="#111" stroke-width="1.2"/><rect x="1097.5" y="289.5" width="11" height="9" fill="#fff" stroke="#4a5560"/><rect x="1098" y="290" width="10" height="2" fill="#7aa8d8"/><path d="M1100 295.5h1M1102.5 295.5h1M1105 295.5h1" stroke="#222" stroke-width="1.2"/><rect x="903.5" y="548.5" width="9" height="8.5" fill="#fff" stroke="#5a6670"/><path d="M905.5 552.8h5" stroke="#111" stroke-width="1.2"/><path d="M908 550.5v5" stroke="#111" stroke-width="1.2"/><rect x="1097.5" y="545.5" width="11" height="9" fill="#fff" stroke="#4a5560"/><rect x="1098" y="546" width="10" height="2" fill="#7aa8d8"/><path d="M1100 551.5h1M1102.5 551.5h1M1105 551.5h1" stroke="#222" stroke-width="1.2"/><rect x="903.5" y="209.5" width="139" height="28" fill="#f7f7f7" stroke="#e6e6e6"/><rect x="1055.5" y="209.5" width="51" height="28" fill="#f7f7f7" stroke="#e6e6e6"/><text x="0" y="0" transform="translate(912.8,229.3) scale(0.82,1)" font-family="Liberation Sans" font-weight="bold" font-size="18" fill="#1f2d3a">B</text><path d="M939 229l4-12" stroke="#22313f" stroke-width="2.2"/><path d="M937.5 229h4M941.5 217h4" stroke="#22313f" stroke-width="1.2"/><path d="M962 217v7a4.5 4.5 0 0 0 9 0v-7" stroke="#22313f" stroke-width="1.8" fill="none"/><rect x="960.5" y="230" width="13" height="1.3" fill="#22313f"/><path d="M982.0 222.0h5l-2.5 3z" fill="#000"/><text x="995" y="226.5" font-family="Liberation Sans" font-size="6.5" fill="#333">ABC</text><path d="M995 223.5h16" stroke="#333" stroke-width=".9"/><text x="1021" y="230" font-family="Liberation Sans" font-weight="bold" font-size="14" fill="#8a9aaa">A</text><text x="1019" y="228" font-family="Liberation Sans" font-weight="bold" font-size="14" fill="#3a6a9a">A</text><path d="M1061 216v14" stroke="#2a3a4a" stroke-width="1.5"/><text x="1063" y="231" font-family="Liberation Sans" font-weight="bold" font-size="12" fill="#2a4a6a">A</text><path d="M1068 218l3-3 3 3z" fill="#e06a3a"/><path d="M1086 216v14" stroke="#2a3a4a" stroke-width="1.5"/><text x="1088" y="231" font-family="Liberation Sans" font-weight="bold" font-size="12" fill="#2a4a6a">A</text><path d="M1093 215l3 3 3-3z" fill="#e06a3a"/><rect x="903.5" y="249.5" width="53" height="29" fill="#f7f7f7" stroke="#e6e6e6"/><rect x="965.5" y="249.5" width="39" height="29" fill="#f7f7f7" stroke="#e6e6e6"/><rect x="1022.5" y="249.5" width="39" height="29" fill="#f7f7f7" stroke="#e6e6e6"/><rect x="1068.5" y="249.5" width="38" height="29" fill="#f7f7f7" stroke="#e6e6e6"/><text x="909" y="272" font-family="Liberation Sans" font-weight="bold" font-size="13" fill="#8a8a8a">A</text><text x="916" y="264" font-family="Liberation Sans" font-weight="bold" font-size="9" fill="#2a5a8a">A</text><path d="M918 268l3 3h-6z" fill="#e06a3a"/><text x="934" y="272" font-family="Liberation Sans" font-weight="bold" font-size="13" fill="#8a8a8a">A</text><text x="941" y="272" font-family="Liberation Sans" font-weight="bold" font-size="9" fill="#2a5a8a">A</text><path d="M943 258l3 3h-6z" fill="#e06a3a"/><text x="970" y="264" font-family="Liberation Sans" font-weight="bold" font-size="9" fill="#4a5a6a">AV</text><path d="M979 257l3 8" stroke="#c03030" stroke-width="1.2"/><path d="M971 271h14M971 271l3-2.5v5zM985 271l-3-2.5v5z" stroke="#3a7ac0" stroke-width="1.6" fill="#3a7ac0"/><path d="M993.8 262.5h5l-2.5 3z" fill="#000"/><path d="M1028 267l5-11h3.5l5 11h-3.2l-1-2.5h-5.1l-1 2.5zM1033.1 262h3.3l-1.65-4z" fill="#5a7a9a" stroke="#1a2a3a" stroke-width="1" fill-rule="evenodd"/><rect x="1027" y="268.5" width="16.5" height="3.7" fill="#7a1010"/><path d="M1051.0 262.5h5l-2.5 3z" fill="#000"/><rect x="1072" y="256" width="16" height="12" fill="#f4f2a0"/><rect x="1072" y="268" width="16" height="4.2" fill="#f0ec20"/><text x="1071.8" y="265" font-family="Liberation Sans" font-size="9" fill="#222">ab</text><path d="M1078.5 266.5l8-8 2.2 2.2-8 8-3 .8z" fill="#dcdcdc" stroke="#4a4a4a" stroke-width=".9"/><path d="M1096.0 262.5h5l-2.5 3z" fill="#000"/><rect x="903.5" y="311.5" width="102" height="29" fill="#f7f7f7" stroke="#e6e6e6"/><rect x="904.5" y="312.5" width="26" height="27" fill="#c7e0f7" stroke="#83b6e6"/><rect x="911" y="321" width="13" height="1.4" fill="#1a2530"/><rect x="911" y="324" width="9" height="1.4" fill="#1a2530"/><rect x="911" y="327" width="13" height="1.4" fill="#1a2530"/><rect x="911" y="330" width="9" height="1.4" fill="#1a2530"/><rect x="936.0" y="321" width="13" height="1.4" fill="#1a2530"/><rect x="938.0" y="324" width="9" height="1.4" fill="#1a2530"/><rect x="936.0" y="327" width="13" height="1.4" fill="#1a2530"/><rect x="938.0" y="330" width="9" height="1.4" fill="#1a2530"/><rect x="961" y="321" width="13" height="1.4" fill="#1a2530"/><rect x="965" y="324" width="9" height="1.4" fill="#1a2530"/><rect x="961" y="327" width="13" height="1.4" fill="#1a2530"/><rect x="965" y="330" width="9" height="1.4" fill="#1a2530"/><rect x="986" y="321" width="13" height="1.4" fill="#1a2530"/><rect x="986" y="324" width="13" height="1.4" fill="#1a2530"/><rect x="986" y="327" width="13" height="1.4" fill="#1a2530"/><rect x="986" y="330" width="13" height="1.4" fill="#1a2530"/><rect x="903.5" y="346.5" width="75" height="29" fill="#f7f7f7" stroke="#e6e6e6"/><rect x="905.5" y="347.5" width="24" height="27" fill="#c7e0f7" stroke="#83b6e6"/><rect x="929.5" y="347.5" width="11" height="27" fill="#9ccaf2" stroke="#6aa2d8"/><circle cx="911" cy="357" r="1.8" fill="none" stroke="#1a2530" stroke-width="1.3"/><circle cx="911" cy="364" r="1.8" fill="none" stroke="#1a2530" stroke-width="1.3"/><path d="M915 356h9M915 358.5h7M915 363h9M915 365.5h7" stroke="#1a2530" stroke-width="1.4"/><path d="M932.5 359.5h5l-2.5 3z" fill="#000"/><path d="M946.0 355.5h3M947.5 355.5v4M946.0 359.5h3" stroke="#3a5a6a" stroke-width="1"/><path d="M945.5 362.5h5M947.0 362.5v4M949.0 362.5v4M945.5 366.5h5" stroke="#3a5a6a" stroke-width="1"/><path d="M952.5 356.5h9M952.5 359h7M952.5 363.5h9M952.5 366h7" stroke="#1a2530" stroke-width="1.4"/><path d="M968.0 359.5h5l-2.5 3z" fill="#000"/><rect x="999.5" y="346.5" width="52" height="29" fill="#f7f7f7" stroke="#e6e6e6"/><path d="M1004 359l5-5 5 5-4 4z" fill="#a8c8e8" stroke="#3a4a5a" stroke-width="1"/><path d="M1014 358c2 2 2 4 0 5" stroke="#3a4a5a" fill="none"/><rect x="1018.5" y="354.5" width="14" height="14" fill="#fff" stroke="#222" stroke-width="1.2"/><rect x="1020.5" y="356.5" width="10" height="10" fill="none" stroke="#444" stroke-width=".8"/><path d="M1041.0 359.5h5l-2.5 3z" fill="#000"/><rect x="903.5" y="397.5" width="52" height="29" fill="#f7f7f7" stroke="#e6e6e6"/><rect x="1012.5" y="397.5" width="83" height="29" fill="#f7f7f7" stroke="#e6e6e6"/><path d="M909.3 408.5l3.2-4 3.2 4zM909.3 413.3l3.2 4 3.2-4z" fill="#8ac0e8" stroke="#1a3a5a" stroke-width="1" stroke-linejoin="round"/><path d="M917.2 404.7h7.4M917.2 406.7h7.4M917.2 408.6h7.4M917.2 413.6h7.4M917.2 415.6h7.4M917.2 417.6h7.4" stroke="#1a2530" stroke-width="1.1"/><path d="M934.3 404.5l3.2 4 3.2-4zM934.3 417.5l3.2-4 3.2 4z" fill="#8ac0e8" stroke="#1a3a5a" stroke-width="1" stroke-linejoin="round"/><path d="M942.2 404.7h7.4M942.2 406.7h7.4M942.2 408.6h7.4M942.2 413.6h7.4M942.2 415.6h7.4M942.2 417.6h7.4" stroke="#1a2530" stroke-width="1.1"/><path d="M1025 403v14" stroke="#777" stroke-width=".8"/><path d="M1026 404h8M1027 407.5h7M1027 411h7M1026 414.5h8" stroke="#2a7aa0" stroke-width="1.5"/><path d="M1025 409.5l-4-3.5v2h-3v3h3v2z" fill="#e05a3a" stroke="#a03020" stroke-width=".6"/><path d="M1050 403v14" stroke="#777" stroke-width=".8"/><path d="M1051 404h8M1052 407.5h7M1052 411h7M1051 414.5h8" stroke="#2a7aa0" stroke-width="1.5"/><path d="M1044 409.5l4-3.5v2h3v3h-3v2z" fill="#e05a3a" stroke="#a03020" stroke-width=".6"/><path d="M1077 409.5l-4-3.5v2h-4v3h4v2z" fill="#7ad05a" stroke="#3a8a2a" stroke-width=".8"/><path d="M1078 407h6M1084 405v4" stroke="#333" stroke-width=".8"/><path d="M1085 405h4M1085 408h4M1085 411h4M1085 414h4M1085 417h4" stroke="#2a3a4a" stroke-width="1.2"/><path d="M910.5 444h3M912 444v6M910.5 450h3" stroke="#333" stroke-width=".9"/><path d="M904 453h14M904 456h14M904 459h14" stroke="#2a4a6a" stroke-width="1.6"/><path d="M904 475h14M904 478h14M904 481h14" stroke="#2a4a6a" stroke-width="1.6"/><path d="M910.5 484h3M912 484v6M910.5 490h3" stroke="#333" stroke-width=".9"/><path d="M1013 444v4M1013 446h6M1019 444v4" stroke="#333" stroke-width=".9"/><path d="M1021 445h6M1022 448h5M1022 451h5M1022 454h5M1021 457h6" stroke="#2a4a6a" stroke-width="1.4"/><path d="M1013 476h6M1013 479h5M1013 482h5M1013 485h5M1013 488h6" stroke="#2a4a6a" stroke-width="1.4"/><path d="M1021 476v4M1021 478h6M1027 476v4" stroke="#333" stroke-width=".9"/><path d="M1013 507h14M1013 511h14M1013 515h14M1013 519h14" stroke="#2a4a6a" stroke-width="1.5"/><path d="M1015 504h3M1021 504h5" stroke="#333" stroke-width="1"/><rect x="903.5" y="500.5" width="41" height="28" fill="#f7f7f7" stroke="#e6e6e6"/><path d="M912 505v14M909.5 507.5l2.5-2.5 2.5 2.5M909.5 516.5l2.5 2.5 2.5-2.5" stroke="#2a4a6a" stroke-width="1.4" fill="none"/><path d="M916 508h8M916 511.5h8M916 515h8" stroke="#2a4a6a" stroke-width="1.6"/><path d="M934.0 512.5h5l-2.5 3z" fill="#000"/><path d="M1131 132h8M1131 135h8M1131 138h6" stroke="#2a3a4a" stroke-width="1.2"/><path d="M1135 139h6l-3 3z" fill="#000"/><rect x="1124" y="155" width="25" height="1" fill="#d6d6d6"/><rect x="1119.5" y="159.5" width="30" height="29" rx="3" fill="#f4f4f4" stroke="#b8b8b8"/><path d="M1134.5 164.0L1144.5 169.5L1134.5 175.0L1124.5 169.5z" fill="#6ad0f0" stroke="#bff4ff" stroke-width=".7"/><path d="M1124.5 169.5L1134.5 175.0L1134.5 184.5L1124.5 179.0z" fill="#2a96c8" stroke="#9fe8ff" stroke-width=".7"/><path d="M1134.5 175.0L1144.5 169.5L1144.5 179.0L1134.5 184.5z" fill="#7ad83a" stroke="#c8ff8a" stroke-width=".7"/><path d="M1129.5 166.75l10 5.5M1139.5 166.75l-10 5.5" stroke="#dff" stroke-width=".8"/><path d="M1129.5 172.25v9.5M1124.5 174.25l10 5.5" stroke="#bff" stroke-width=".8"/><path d="M1139.5 172.25v9.5M1134.5 179.75l10 -5.5" stroke="#dfa" stroke-width=".8"/><ellipse cx="1135" cy="219" rx="9" ry="1.5" fill="#d8d8d8"/><path d="M1127 208c3-6 9-8 13-5 4 3 2 9-3 12l-8 4z" fill="#1d5f9a" stroke="#0f3a66" stroke-width=".6"/><path d="M1133 213c3-1 7-1 8 2-1 3-4 4-7 4z" fill="#4aa83a"/><ellipse cx="1129" cy="202" rx="3.2" ry="2.3" fill="#b8741e"/><circle cx="1136.5" cy="199.5" r="2" fill="#c87ae0"/><circle cx="1142.5" cy="202" r="2" fill="#f0d24a"/><circle cx="1125.5" cy="208" r="2" fill="#e87ac0"/><circle cx="1144" cy="209" r="1.8" fill="#e86a8a"/><ellipse cx="1136" cy="254" rx="8" ry="1.3" fill="#d0d0d0"/><path d="M1123.5 240.5l13-7 9 9-13 8z" fill="#e4f0d8" stroke="#6a7a6a" stroke-width=".7" stroke-dasharray="1 .6"/><path d="M1126 240l10-5.5 7 7-10 6z" fill="#8ac8f0"/><path d="M1129 244l4-4 2 3 3-2 4 1.5-9 5z" fill="#3a8a2a"/><path d="M1129 243l3-3 3 3" stroke="#1a3a6a" stroke-width="1.3" fill="none"/><circle cx="1135" cy="280" r="9.5" fill="#f2c060"/><circle cx="1135" cy="280" r="7.5" fill="#fbf6ee" stroke="#d89a30" stroke-width="1"/><path d="M1140 275l-4 6-2-2z" fill="#d83a3a"/><path d="M1130 285l4-6 2 2z" fill="#3a6ac0"/><circle cx="1135" cy="280" r="1" fill="#fff"/><text x="1132.8" y="274.3" font-family="Liberation Sans" font-weight="bold" font-size="5.5" fill="#222">N</text></svg><div class="a" style="left:903px;top:176px;width:145px;height:23px;background:#fff;border:1px solid #abadb3"></div><div class="a t" style="left:907px;top:176px;height:23px;line-height:23px;font-size:12px;color:#000">Port Lligat Slab</div><div class="a" style="left:1029px;top:178px;width:17px;height:19px;background:linear-gradient(#f2f2f2,#e0e0e0);border:1px solid #b9b9b9"></div><svg class="a" style="left:0;top:0" width="1163" height="762"><path d="M1033.5 185.5l4 4l4-4" stroke="#444" stroke-width="1.8" fill="none"/></svg><div class="a" style="left:1054px;top:176px;width:51px;height:23px;background:#fff;border:1px solid #abadb3"></div><div class="a t" style="left:1058px;top:176px;height:23px;line-height:23px;font-size:12px;color:#000">10</div><div class="a" style="left:1086px;top:178px;width:17px;height:19px;background:linear-gradient(#f2f2f2,#e0e0e0);border:1px solid #b9b9b9"></div><svg class="a" style="left:0;top:0" width="1163" height="762"><path d="M1090.5 185.5l4 4l4-4" stroke="#444" stroke-width="1.8" fill="none"/></svg><div class="a" style="left:924px;top:438px;width:82px;height:23px;background:#fff;border:1px solid #b4b4b4"></div><div class="a t" style="left:928px;top:438px;height:23px;line-height:24px;font-size:12px">0.00&quot;</div><div class="a" style="left:990px;top:440px;width:14px;height:9px;background:#ececec;border:1px solid #c4c4c4"></div><div class="a" style="left:990px;top:449px;width:14px;height:9px;background:#ececec;border:1px solid #c4c4c4"></div><svg class="a" style="left:0;top:0" width="1163" height="762"><path d="M993.5 446.75h7l-3.5-3.5z" fill="#111"/><path d="M993.5 452.75h7l-3.5 3.5z" fill="#111"/></svg><div class="a" style="left:1033px;top:438px;width:75px;height:23px;background:#fff;border:1px solid #b4b4b4"></div><div class="a t" style="left:1037px;top:438px;height:23px;line-height:24px;font-size:12px">1.25&quot;</div><div class="a" style="left:1092px;top:440px;width:14px;height:9px;background:#ececec;border:1px solid #c4c4c4"></div><div class="a" style="left:1092px;top:449px;width:14px;height:9px;background:#ececec;border:1px solid #c4c4c4"></div><svg class="a" style="left:0;top:0" width="1163" height="762"><path d="M1095.5 446.75h7l-3.5-3.5z" fill="#111"/><path d="M1095.5 452.75h7l-3.5 3.5z" fill="#111"/></svg><div class="a" style="left:924px;top:469px;width:82px;height:23px;background:#fff;border:1px solid #b4b4b4"></div><div class="a t" style="left:928px;top:469px;height:23px;line-height:24px;font-size:12px">0.00&quot;</div><div class="a" style="left:990px;top:471px;width:14px;height:9px;background:#ececec;border:1px solid #c4c4c4"></div><div class="a" style="left:990px;top:480px;width:14px;height:9px;background:#ececec;border:1px solid #c4c4c4"></div><svg class="a" style="left:0;top:0" width="1163" height="762"><path d="M993.5 477.75h7l-3.5-3.5z" fill="#111"/><path d="M993.5 483.75h7l-3.5 3.5z" fill="#111"/></svg><div class="a" style="left:1033px;top:469px;width:75px;height:23px;background:#fff;border:1px solid #b4b4b4"></div><div class="a t" style="left:1037px;top:469px;height:23px;line-height:24px;font-size:12px">0.00&quot;</div><div class="a" style="left:1092px;top:471px;width:14px;height:9px;background:#ececec;border:1px solid #c4c4c4"></div><div class="a" style="left:1092px;top:480px;width:14px;height:9px;background:#ececec;border:1px solid #c4c4c4"></div><svg class="a" style="left:0;top:0" width="1163" height="762"><path d="M1095.5 477.75h7l-3.5-3.5z" fill="#111"/><path d="M1095.5 483.75h7l-3.5 3.5z" fill="#111"/></svg><div class="a" style="left:1033px;top:501px;width:75px;height:23px;background:#fff;border:1px solid #b4b4b4"></div><div class="a t" style="left:1037px;top:501px;height:23px;line-height:24px;font-size:12px">-0.25&quot;</div><div class="a" style="left:1092px;top:503px;width:14px;height:9px;background:#ececec;border:1px solid #c4c4c4"></div><div class="a" style="left:1092px;top:512px;width:14px;height:9px;background:#ececec;border:1px solid #c4c4c4"></div><svg class="a" style="left:0;top:0" width="1163" height="762"><path d="M1095.5 509.75h7l-3.5-3.5z" fill="#111"/><path d="M1095.5 515.75h7l-3.5 3.5z" fill="#111"/></svg><div class="a" style="left:8px;top:731px;width:1147px;height:23px;background:#f0f0f0;border-top:1px solid #e4e4e4"></div><div class="a" style="left:885px;top:731px;width:269px;height:1px;background:#a0a0a0"></div><div class="a" style="left:1153px;top:117px;width:1px;height:614px;background:#a8a8a8"></div><div class="a" style="left:8px;top:754px;width:1147px;height:1px;background:#d8ecfb"></div><div class="a t" style="left:18px;top:737.5px;font-size:12px;letter-spacing:-0.25px">Page 1 / 2</div><div class="a t" style="left:187px;top:737.5px;font-size:12px;letter-spacing:-0.25px">Default</div><div class="a t" style="left:393px;top:737.5px;font-size:12px;letter-spacing:-0.25px">English (USA)</div><div class="a t" style="left:529px;top:737.5px;font-size:12px;letter-spacing:-0.25px">INSRT</div><div class="a t" style="left:574px;top:737.5px;font-size:12px;letter-spacing:-0.25px">STD</div><div class="a t" style="left:751px;top:737.5px;font-size:12px;letter-spacing:-0.25px">Level 1</div><div class="a t" style="left:1120px;top:737.5px;font-size:12px;letter-spacing:-0.25px">90%</div><svg class="a" style="left:0;top:0" width="1163" height="762"><rect x="181.0" y="736" width="1" height="17" fill="#b8b8b8"/><rect x="336.0" y="736" width="1" height="17" fill="#b8b8b8"/><rect x="524.0" y="736" width="1" height="17" fill="#b8b8b8"/><rect x="569.0" y="736" width="1" height="17" fill="#b8b8b8"/><rect x="603.0" y="736" width="1" height="17" fill="#b8b8b8"/><rect x="619.0" y="736" width="1" height="17" fill="#b8b8b8"/><rect x="648.0" y="736" width="1" height="17" fill="#b8b8b8"/><rect x="893.0" y="736" width="1" height="17" fill="#b8b8b8"/><rect x="969.0" y="736" width="1" height="17" fill="#b8b8b8"/><rect x="1112.0" y="736" width="1" height="17" fill="#b8b8b8"/><path d="M901.5 737.5h7l3 3v9h-10z" fill="#fafafa" stroke="#6a7a8a"/><path d="M915.5 737.5h8l2 2v10h-10z" fill="#d8e6f4" stroke="#3a5a7a"/><path d="M926.5 737.5h8l2 2v10h-10z" fill="#d8e6f4" stroke="#3a5a7a"/><path d="M940.5 738.5h8v11h-8zM948.5 738.5h9v11h-9z" fill="#fafafa" stroke="#7a8a9a"/><circle cx="980.5" cy="744" r="5.3" fill="#e4eef8" stroke="#4a6a8a" stroke-width="1.3"/><path d="M977.5 744h6" stroke="#1a3a5a" stroke-width="1.5"/><path d="M991 744h96" stroke="#8a8a8a" stroke-width="1"/><path d="M1007.5 740v8M1039.5 740v8" stroke="#8a8a8a" stroke-width="1"/><circle cx="1033.5" cy="744" r="4.5" fill="#5a7a9a" stroke="#2a4a6a"/><circle cx="1098.5" cy="744" r="5.3" fill="#e4eef8" stroke="#4a6a8a" stroke-width="1.3"/><path d="M1095.5 744h6M1098.5 741v6" stroke="#1a3a5a" stroke-width="1.5"/></svg></body></html>
